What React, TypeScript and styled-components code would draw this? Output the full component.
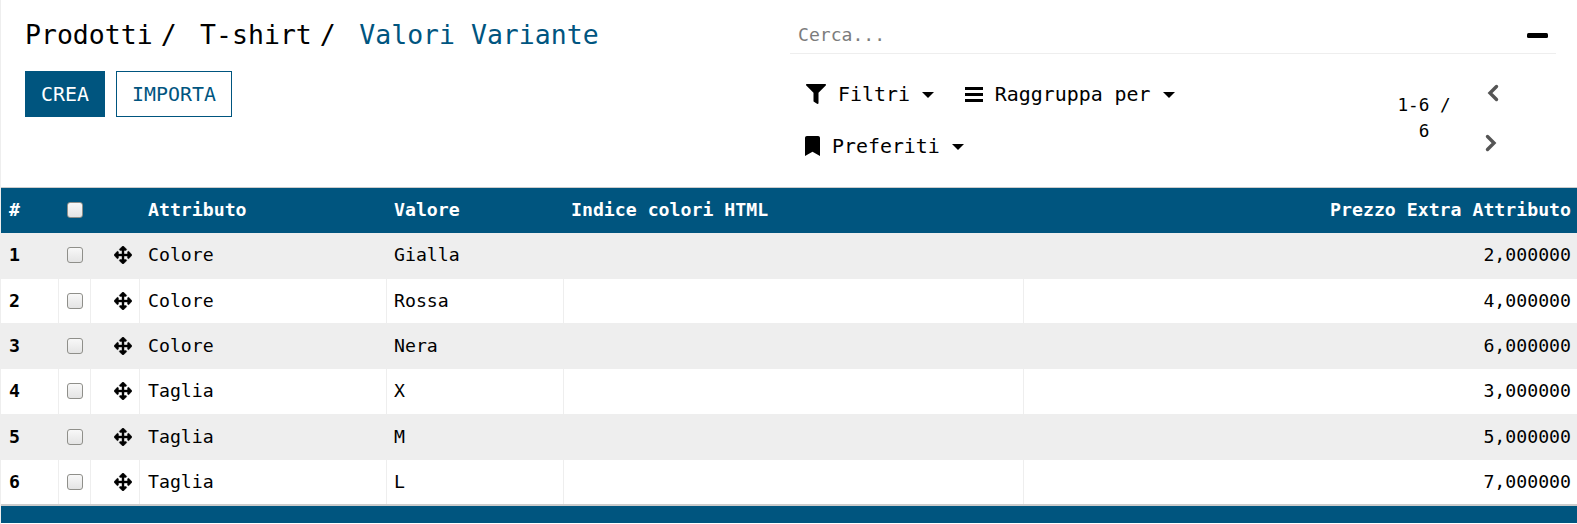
import React from "react";
import styled, { createGlobalStyle } from "styled-components";

const blue = "#00557f";

const Global = createGlobalStyle`
  * { box-sizing: border-box; }
  body { margin: 0; background: #fff; color: #000; font-family: "DejaVu Sans Mono", monospace; font-size: 18.2px; }
  button { font: inherit; color: inherit; background: none; border: 0; padding: 0; }
`;

const Page = styled.main`
  height: 524px;
  overflow: hidden;
  border-left: 1px solid #eeeeee;
`;
const ControlPanel = styled.header`
  display: flex;
  height: 188px;
  border-bottom: 1px solid #cccccc;
`;
const Left = styled.div`
  width: 789px;
  padding: 18px 0 0 24px;
`;
const Breadcrumb = styled.nav`
  display: flex;
  height: 34px;
  line-height: 34px;
  font-size: 26.5px;
  white-space: pre;
`;
const Crumb = styled.span<{ $active?: boolean }>`
  color: ${(p) => (p.$active ? blue : "#000")};
`;
const Slash = styled.span`
  margin: 0 23.5px 0 8px;
`;
const Buttons = styled.div`
  display: flex;
  gap: 11px;
  margin-top: 19px;
  font-size: 19.9px;
`;
const Button = styled.button<{ $primary?: boolean; $width: number }>`
  && {
    width: ${(p) => p.$width}px;
    height: 46px;
    border: 1px solid ${blue};
    color: ${(p) => (p.$primary ? "#fff" : blue)};
    background: ${(p) => (p.$primary ? blue : "#fff")};
  }
`;
const Right = styled.div`
  width: 766px;
`;
const Search = styled.div`
  display: flex;
  align-items: center;
  justify-content: space-between;
  height: 54px;
  padding: 16px 8px 0 8px;
  border-bottom: 1px solid #eeeeee;
  color: #7c7c7c;
  font-size: 18.1px;
`;
const Minus = styled.span`
  width: 21px;
  height: 5px;
  margin-top: 2px;
  border-radius: 1.5px;
  background: #000;
`;
const Tools = styled.div`
  display: flex;
`;
const Filters = styled.div`
  display: flex;
  flex-wrap: wrap;
  align-content: flex-start;
  width: 440px;
  padding: 14px 0 0 15px;
  font-size: 19.9px;
`;
const FilterButton = styled.button<{ $indent?: number }>`
  && {
    display: flex;
    align-items: center;
    height: 52px;
    margin: 0 29px 0 ${(p) => p.$indent ?? 0}px;
  }
`;
const Label = styled.span<{ $gap: number }>`
  margin: 0 12px 0 ${(p) => p.$gap}px;
`;
const Caret = styled.span`
  border: 6px solid transparent;
  border-top-color: #000;
  border-bottom: 0;
  margin-top: 1px;
`;
const Pager = styled.div`
  display: flex;
  margin-left: 162px;
`;
const Count = styled.div`
  width: 64px;
  padding-top: 38px;
  text-align: center;
  font-size: 17.7px;
  line-height: 26px;
`;
const Arrows = styled.div`
  display: flex;
  flex-direction: column;
  gap: 32px;
  padding: 29.5px 0 0 28.5px;
`;
const Chevron = styled.svg<{ $shift?: number }>`
  display: block;
  width: 12px;
  height: 18px;
  margin-left: ${(p) => p.$shift ?? 0}px;
  fill: none;
  stroke: #555;
  stroke-width: 3.4;
  stroke-linecap: round;
`;

const Table = styled.table`
  width: 1576px;
  table-layout: fixed;
  border-collapse: separate;
  border-spacing: 0;
`;
const Row = styled.tr<{ $h: number; $below: number; $striped?: boolean }>`
  height: ${(p) => p.$h}px;
  background: ${(p) => (p.$striped ? "#eeeeee" : "#fff")};
  && > td { padding-bottom: ${(p) => p.$below}px; }
`;
const HeadRow = styled.tr`
  height: 45px;
  background: ${blue};
  color: #fff;
`;
const cell = `
  padding: 0 6px 2px 8px;
  white-space: nowrap;
  line-height: 24px;
  &:nth-child(5), &:nth-child(6) { padding-left: 7px; }
`;
const Head = styled.th<{ $right?: boolean }>`
  ${cell}
  text-align: ${(p) => (p.$right ? "right" : "left")};
`;
const Cell = styled.td<{ $right?: boolean; $bold?: boolean; $last?: boolean }>`
  ${cell}
  text-align: ${(p) => (p.$right ? "right" : "left")};
  font-weight: ${(p) => (p.$bold ? 700 : 400)};
  border-right: ${(p) => (p.$last ? 0 : "1px solid #eeeeee")};
`;
const Check = styled.span`
  display: block;
  width: 16px;
  height: 16px;
  border: 1px solid #8f8f8a;
  border-radius: 3px;
  background: linear-gradient(#f8f8f8, #e4e4e4);
`;
const Move = styled.svg`
  display: block;
  width: 18px;
  height: 18px;
  margin-left: 15px;
`;
const Footer = styled.footer`
  height: 19px;
  border-top: 2px solid #cccccc;
  background: ${blue};
`;

const rows = [
  { attr: "Colore", value: "Gialla", price: "2,000000", h: 46, below: 2 },
  { attr: "Colore", value: "Rossa", price: "4,000000", h: 44, below: 0 },
  { attr: "Colore", value: "Nera", price: "6,000000", h: 46, below: 0 },
  { attr: "Taglia", value: "X", price: "3,000000", h: 45, below: 1 },
  { attr: "Taglia", value: "M", price: "5,000000", h: 46, below: 0 },
  { attr: "Taglia", value: "L", price: "7,000000", h: 44, below: 0 },
];
const columns = [58, 32, 49, 247, 177, 460, 553];

const FilterIcon = () => (
  <svg width="20" height="20" viewBox="0 0 512 512">
    <path d="M487.976 0H24.028C2.71 0-8.047 25.866 7.058 40.971L192 225.941V432c0 7.831 3.821 15.17 10.237 19.662l80 55.98C298.02 518.69 320 507.493 320 487.98V225.941l184.947-184.97C520.021 25.896 509.338 0 487.976 0z" />
  </svg>
);
const BarsIcon = () => (
  <svg width="18" height="15" viewBox="0 0 18 15">
    <path d="M0 0h18v3H0zM0 6h18v3H0zM0 12h18v3H0z" />
  </svg>
);
const BookmarkIcon = () => (
  <svg width="15" height="20" viewBox="0 0 384 512">
    <path d="M0 512V48C0 21.49 21.49 0 48 0h288c26.51 0 48 21.49 48 48v464L192 400 0 512z" />
  </svg>
);
const MoveIcon = () => (
  <Move viewBox="0 0 512 512">
    <path
      stroke="#000"
      strokeWidth="12"
      d="M352.201 425.775l-79.196 79.196c-9.373 9.373-24.568 9.373-33.941 0l-79.196-79.196c-15.119-15.119-4.411-40.971 16.971-40.97h51.162L228 284H127.196v51.162c0 21.382-25.851 32.09-40.971 16.971L7.029 272.937c-9.373-9.373-9.373-24.569 0-33.941L86.225 159.8c15.119-15.119 40.971-4.411 40.971 16.971V228H228V127.196h-51.23c-21.382 0-32.09-25.851-16.971-40.971l79.196-79.196c9.373-9.373 24.568-9.373 33.941 0l79.196 79.196c15.119 15.119 4.411 40.971-16.971 40.971h-51.162V228h100.804v-51.162c0-21.382 25.851-32.09 40.97-16.971l79.196 79.196c9.373 9.373 9.373 24.569 0 33.941L425.773 352.2c-15.119 15.119-40.971 4.411-40.97-16.971V284H284v100.804h51.23c21.382 0 32.09 25.851 16.971 40.971z"
    />
  </Move>
);

export default function App() {
  return (
    <Page>
      <Global />
      <ControlPanel>
        <Left>
          <Breadcrumb>
            <Crumb>Prodotti</Crumb><Slash>/</Slash>
            <Crumb>T-shirt</Crumb><Slash>/</Slash>
            <Crumb $active>Valori Variante</Crumb>
          </Breadcrumb>
          <Buttons>
            <Button $primary $width={80}>CREA</Button>
            <Button $width={116}>IMPORTA</Button>
          </Buttons>
        </Left>
        <Right>
          <Search>Cerca...<Minus /></Search>
          <Tools>
            <Filters>
              <FilterButton $indent={1}><FilterIcon /><Label $gap={12}>Filtri</Label><Caret /></FilterButton>
              <FilterButton $indent={2}><BarsIcon /><Label $gap={12}>Raggruppa per</Label><Caret /></FilterButton>
              <FilterButton><BookmarkIcon /><Label $gap={12}>Preferiti</Label><Caret /></FilterButton>
            </Filters>
            <Pager>
              <Count>1-6 / 6</Count>
              <Arrows>
                <Chevron viewBox="0 0 12 18" $shift={2}><path d="M9.5 2.5 3 9l6.5 6.5" /></Chevron>
                <Chevron viewBox="0 0 12 18"><path d="M2.5 2.5 9 9l-6.5 6.5" /></Chevron>
              </Arrows>
            </Pager>
          </Tools>
        </Right>
      </ControlPanel>
      <Table>
        <colgroup>{columns.map((w, i) => <col key={i} width={w} />)}</colgroup>
        <thead>
          <HeadRow>
            <Head>#</Head>
            <Head><Check /></Head>
            <Head />
            <Head>Attributo</Head>
            <Head>Valore</Head>
            <Head>Indice colori HTML</Head>
            <Head $right>Prezzo Extra Attributo</Head>
          </HeadRow>
        </thead>
        <tbody>
          {rows.map((r, i) => (
            <Row key={i} $h={r.h} $below={r.below} $striped={i % 2 === 0}>
              <Cell $bold>{i + 1}</Cell>
              <Cell><Check /></Cell>
              <Cell><MoveIcon /></Cell>
              <Cell>{r.attr}</Cell>
              <Cell>{r.value}</Cell>
              <Cell />
              <Cell $right $last>{r.price}</Cell>
            </Row>
          ))}
        </tbody>
      </Table>
      <Footer />
    </Page>
  );
}
